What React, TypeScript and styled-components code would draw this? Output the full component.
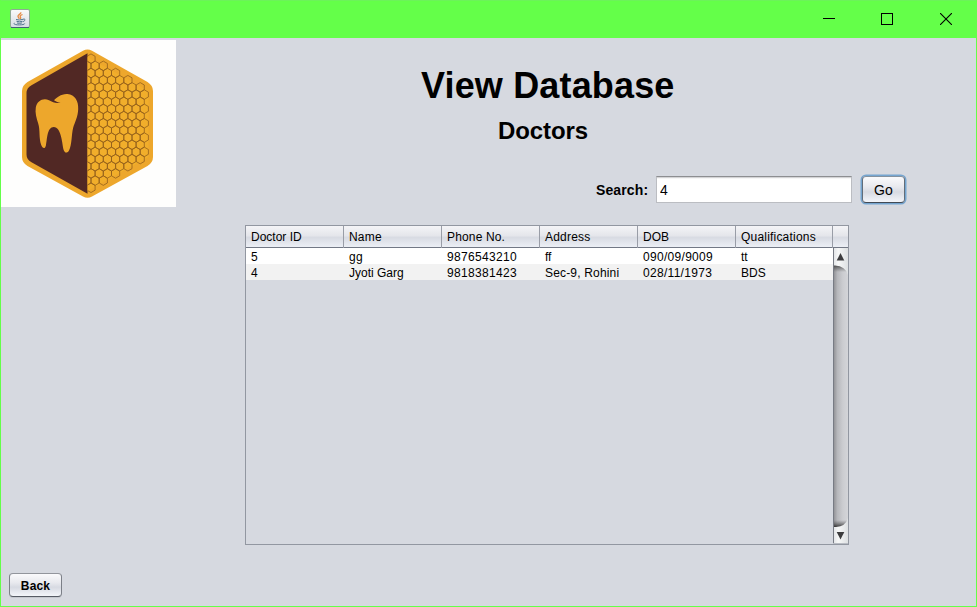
import React from "react";
import styled, { createGlobalStyle } from "styled-components";

const GlobalStyle = createGlobalStyle`
  * { box-sizing: border-box; }
  body { margin: 0; font-family: "Liberation Sans", Arial, sans-serif; color: #000; }
`;

const Window = styled.div`
  width: 977px;
  height: 607px;
  display: flex;
  flex-direction: column;
  background: #d6d9e0;
  border: 1px solid #64ff49;
  border-top: 0;
  overflow: hidden;
`;

const TitleBar = styled.header`
  flex: none;
  height: 38px;
  display: flex;
  align-items: center;
  justify-content: space-between;
  padding: 0 1px 2px 9px;
  background: #64ff49;
  border-top: 1px solid #6cf35a;
`;

const WindowControls = styled.div`
  display: flex;
  height: 100%;
`;

const ControlButton = styled.button`
  width: 58.5px;
  padding: 0;
  border: 0;
  background: none;
  display: flex;
  align-items: center;
  justify-content: center;
`;

const Content = styled.main`
  flex: 1;
  display: grid;
  grid-template-columns: 175px 1fr;
  grid-template-rows: 187px 320px 1fr;
`;

const LogoBox = styled.div`
  margin-top: 2px;
  width: 175px;
  height: 167px;
  background: #fefefd;
  svg { display: block; }
`;

const Heading = styled.div`
  display: flex;
  flex-direction: column;
  padding-left: 245px;
`;

const Title = styled.h1`
  margin: 27px 0 0;
  font-size: 36px;
  line-height: 42px;
  letter-spacing: 0.16px;
  white-space: nowrap;
`;

const Subtitle = styled.h2`
  margin: 10px 0 0 77px;
  font-size: 24px;
  line-height: 28px;
  letter-spacing: -0.1px;
`;

const SearchRow = styled.form`
  display: flex;
  align-items: center;
  margin: 31px 0 0 174px;
`;

const SearchLabel = styled.label`
  width: 61px;
  padding-left: 1px;
  font-size: 14px;
  font-weight: bold;
  letter-spacing: 0.12px;
`;

const SearchInput = styled.input`
  width: 196px;
  height: 27px;
  margin: 0 8px 0 0;
  padding: 0 3px;
  border: 1px solid #bbbdc2;
  border-top-color: #8d8e91;
  border-radius: 0;
  outline: 0;
  background: #fff;
  box-shadow: inset 0 1px 0 #d4d4d6, inset 0 2px 0 #f6f6f6;
  font: 14px "Liberation Sans", Arial, sans-serif;
`;

const Button = styled.button<{ $focused?: boolean }>`
  width: ${(p) => (p.$focused ? 43 : 53)}px;
  height: ${(p) => (p.$focused ? 27 : 24)}px;
  margin: ${(p) => (p.$focused ? "0 0 0 2px" : "0")};
  padding: ${(p) => (p.$focused ? "1px 0 0" : "1px 0 0")};
  border: 1px solid #777c86;
  border-color: ${(p) => (p.$focused ? "#84929f #626d79 #414a55" : "#92959c #7b7f87 #565b64")};
  border-radius: 4px;
  background: linear-gradient(#fafafc, #e8e9ee 40%, #d7dae2 60%, #f3f5fa);
  box-shadow: ${(p) => (p.$focused ? "0 0 0 1.5px #75a5d0" : "0 1px 0 #c4c7ce")};
  font: ${(p) => (p.$focused ? "14px" : "bold 12px")} "Liberation Sans", Arial, sans-serif;
  letter-spacing: 0.15px;
  color: #000;
`;

const TableFrame = styled.section`
  grid-column: 1 / -1;
  width: 604px;
  height: 320px;
  margin-left: 244px;
  border: 1px solid #9297a1;
  display: flex;
  flex-direction: column;
`;

const columns = "98px 98px 98px 98px 98px 97px 15px";

const HeaderRow = styled.div`
  flex: none;
  display: grid;
  grid-template-columns: ${columns};
  height: 22px;
  border-bottom: 1px solid #727885;
  background: linear-gradient(#f4f4f7, #e5e6eb 45%, #d8dbe3 55%, #eceff5);
`;

const HeaderCell = styled.div<{ $track?: number }>`
  padding-left: 5px;
  border-right: 1px solid #999da7;
  font-size: 12px;
  line-height: 22px;
  white-space: nowrap;
  letter-spacing: ${(p) => p.$track ?? 0}px;
  &:last-child { border-right: 0; }
`;

const TableBody = styled.div`
  flex: 1;
  display: flex;
`;

const Rows = styled.div`
  width: 587px;
`;

const Row = styled.div<{ $alt: boolean }>`
  display: grid;
  grid-template-columns: ${columns};
  height: 16px;
  overflow: hidden;
  background: ${(p) => (p.$alt ? "#f2f2f2" : "#fff")};
`;

const Cell = styled.div<{ $track: number }>`
  padding-left: 5px;
  font-size: 12px;
  line-height: 18px;
  white-space: nowrap;
  letter-spacing: ${(p) => p.$track}px;
`;

const ScrollBar = styled.div`
  width: 15px;
  height: 296px;
  svg { display: block; }
`;

const Footer = styled.footer`
  grid-column: 1 / -1;
  padding: 28px 0 0 8px;
`;

const headers = [
  { label: "Doctor ID", track: 0 },
  { label: "Name", track: 0.2 },
  { label: "Phone No.", track: 0.15 },
  { label: "Address", track: 0.2 },
  { label: "DOB", track: 0 },
  { label: "Qualifications", track: 0.2 },
  { label: "", track: 0 },
];

const doctors = [
  [["5", 0], ["gg", 0.3], ["9876543210", 0.33], ["ff", 0], ["090/09/9009", 0.3], ["tt", 0]],
  [["4", 0], ["Jyoti Garg", 0], ["9818381423", 0.33], ["Sec-9, Rohini", 0.17], ["028/11/1973", 0.3], ["BDS", 0]],
] as [string, number][][];

const STEP_X = 8.2;
const STEP_Y = 7.17;
const TOP_Y = 18.7;

function honeycombPath() {
  const half = STEP_X / 2;
  const side = 4.78;
  let d = "";
  for (let row = 0; row <= 18; row++) {
    const edge = Math.min(row, 18 - row);
    const odd = row % 2 === 1;
    const count = [1, 2, 4, 5][edge] ?? 7;
    const start = odd ? 94.1 : 90;
    for (let i = odd ? -1 : 0; i < count; i++) {
      const x = start + i * STEP_X;
      const y = TOP_Y + row * STEP_Y;
      d += `M${x} ${y - side}l${half} ${side / 2}v${side}l${-half} ${side / 2}l${-half} ${-side / 2}v${-side}z`;
    }
  }
  return d;
}

function Logo() {
  return (
    <svg width="175" height="167" viewBox="0 0 175 167">
      <defs>
        <clipPath id="rightHalf"><path d="M86.500 0H175V167H86.500z" /></clipPath>
      </defs>
      <path
        d="M82 10.8Q86.5 8.2 91 10.8L146.5 42Q152 45.5 152 51V117Q152 122.500 146.500 126L91 156.500Q86.500 159 82 156.500L26.500 126Q21 122.500 21 117V51Q21 45.500 26.500 42z"
        fill="#eda72c"
      />
      <path d="M86.500 13.300L30.500 45.200Q25.500 48 25.500 53V114.500Q25.500 119.500 30.500 122.300L86.500 153.700z" fill="#512824" />
      <path d="M86.500 17L147.500 51V117L86.500 151z" fill="#f1ae2b" />
      <path d={honeycombPath()} clipPath="url(#rightHalf)" fill="none" stroke="#93601c" strokeWidth="0.8" />
      <path
        transform="translate(-0.5 0)"
        d="M53.500 60.200C56 57.700 61 53.500 67 54C74.500 54.600 78 61 77.700 69C77.500 77 74.300 82 72.600 88C71 94 71.500 105 68.500 110.500C66.800 113.500 64 113.300 63 109.500C61.500 102 60.500 87 53.300 87C46.500 87 46.800 99 45.400 105.500C44.600 109 42.200 109 40.700 105C38.200 98 39.800 90 37.700 83.500C36 78 34.400 73 35.300 67.500C36.500 60.500 43 57.500 48.500 60.200C52.500 62.200 56 64 60 62.300C57.300 62.500 55.500 61.500 53.500 60.200z"
        fill="#eda72c"
      />
    </svg>
  );
}

function JavaIcon() {
  return (
    <svg width="20" height="20" viewBox="0 0 20 20">
      <defs>
        <linearGradient id="javaTile" x2="0" y2="1">
          <stop stopColor="#fafafa" />
          <stop offset="1" stopColor="#d5dbe3" />
        </linearGradient>
      </defs>
      <rect x="0.500" y="0.500" width="19" height="18" rx="1.500" fill="url(#javaTile)" stroke="#8eaa94" />
      <path d="M1 18.500H19" stroke="#436078" />
      <path d="M10.800 3.200C11.500 5 7.500 5.700 8 7.500C8.200 8.500 9.500 8.800 9 10M12.500 5.500C10 6.500 9.800 7.300 10.500 8.200C11 8.800 10.700 9.400 10.300 10" fill="none" stroke="#e58a45" strokeWidth="1.300" />
      <path d="M6 10.500Q9.500 11.600 13 10.300M6.500 12.300Q9.500 13.300 12.500 12.300M13 10.200C16 9.200 15.300 12.300 12.800 12.700M4.500 14.200C2.500 15 6 16 9.500 15.900S15.500 15.200 14.300 14.400M7 14Q9.500 14.700 12 13.900" fill="none" stroke="#52758f" strokeWidth="1" />
    </svg>
  );
}

function ScrollTrack() {
  return (
    <svg width="15" height="296" viewBox="0 0 15 296">
      <defs>
        <linearGradient id="track">
          <stop stopColor="#8b8b8f" />
          <stop offset="0.300" stopColor="#b7b8bc" />
          <stop offset="0.650" stopColor="#cbccd0" />
          <stop offset="1" stopColor="#d4d5d9" />
        </linearGradient>
        <linearGradient id="cap">
          <stop stopColor="#dfe1e4" />
          <stop offset="0.350" stopColor="#f7f8f8" />
          <stop offset="1" stopColor="#dde0e2" />
        </linearGradient>
        <linearGradient id="shadeTop" x2="0" y2="1">
          <stop stopColor="#333" stopOpacity="0.850" />
          <stop offset="1" stopColor="#555" stopOpacity="0" />
        </linearGradient>
        <linearGradient id="shadeBottom" x2="0" y2="1">
          <stop stopColor="#555" stopOpacity="0" />
          <stop offset="1" stopColor="#222" stopOpacity="0.850" />
        </linearGradient>
      </defs>
      <path d="M0 0H15V296H0z" fill="url(#track)" />
      <path d="M0 17H15V24H0z" fill="url(#shadeTop)" />
      <path d="M0 272H15V279H0z" fill="url(#shadeBottom)" />
      <path d="M0 0H15V27Q12.500 18 2 17.500H0z" fill="url(#cap)" />
      <path d="M0 296H15V270Q12.500 278.500 3 279H0z" fill="url(#cap)" />
      <path d="M0.500 0V296" stroke="#777b84" />
      <path d="M0 295.500H15" stroke="#b8bcc3" />
      <path d="M7.500 5L11.300 12.500H3.700z" fill="#3c3c3e" />
      <path d="M3.700 284H11.300L7.500 291.500z" fill="#3c3c3e" />
    </svg>
  );
}

export default function App() {
  return (
    <>
      <GlobalStyle />
      <Window>
        <TitleBar>
          <JavaIcon />
          <WindowControls>
            <ControlButton aria-label="Minimize">
              <svg width="12" height="12" shapeRendering="crispEdges"><path d="M0 5.500H12" stroke="#000" /></svg>
            </ControlButton>
            <ControlButton aria-label="Maximize">
              <svg width="12" height="12" shapeRendering="crispEdges"><path d="M0.500 0.500H11.500V11.500H0.500z" fill="none" stroke="#000" /></svg>
            </ControlButton>
            <ControlButton aria-label="Close">
              <svg width="12" height="12"><path d="M0 0L12 12M12 0L0 12" stroke="#000" strokeWidth="1.100" /></svg>
            </ControlButton>
          </WindowControls>
        </TitleBar>
        <Content>
          <LogoBox><Logo /></LogoBox>
          <Heading>
            <Title>View Database</Title>
            <Subtitle>Doctors</Subtitle>
            <SearchRow>
              <SearchLabel htmlFor="search">Search:</SearchLabel>
              <SearchInput id="search" defaultValue="4" />
              <Button type="button" $focused>Go</Button>
            </SearchRow>
          </Heading>
          <TableFrame>
            <HeaderRow>
              {headers.map((h, i) => (
                <HeaderCell key={i} $track={h.track}>{h.label}</HeaderCell>
              ))}
            </HeaderRow>
            <TableBody>
              <Rows>
                {doctors.map((cells, r) => (
                  <Row key={r} $alt={r % 2 === 1}>
                    {cells.map(([text, track], c) => (
                      <Cell key={c} $track={track}>{text}</Cell>
                    ))}
                  </Row>
                ))}
              </Rows>
              <ScrollBar><ScrollTrack /></ScrollBar>
            </TableBody>
          </TableFrame>
          <Footer>
            <Button type="button">Back</Button>
          </Footer>
        </Content>
      </Window>
    </>
  );
}
